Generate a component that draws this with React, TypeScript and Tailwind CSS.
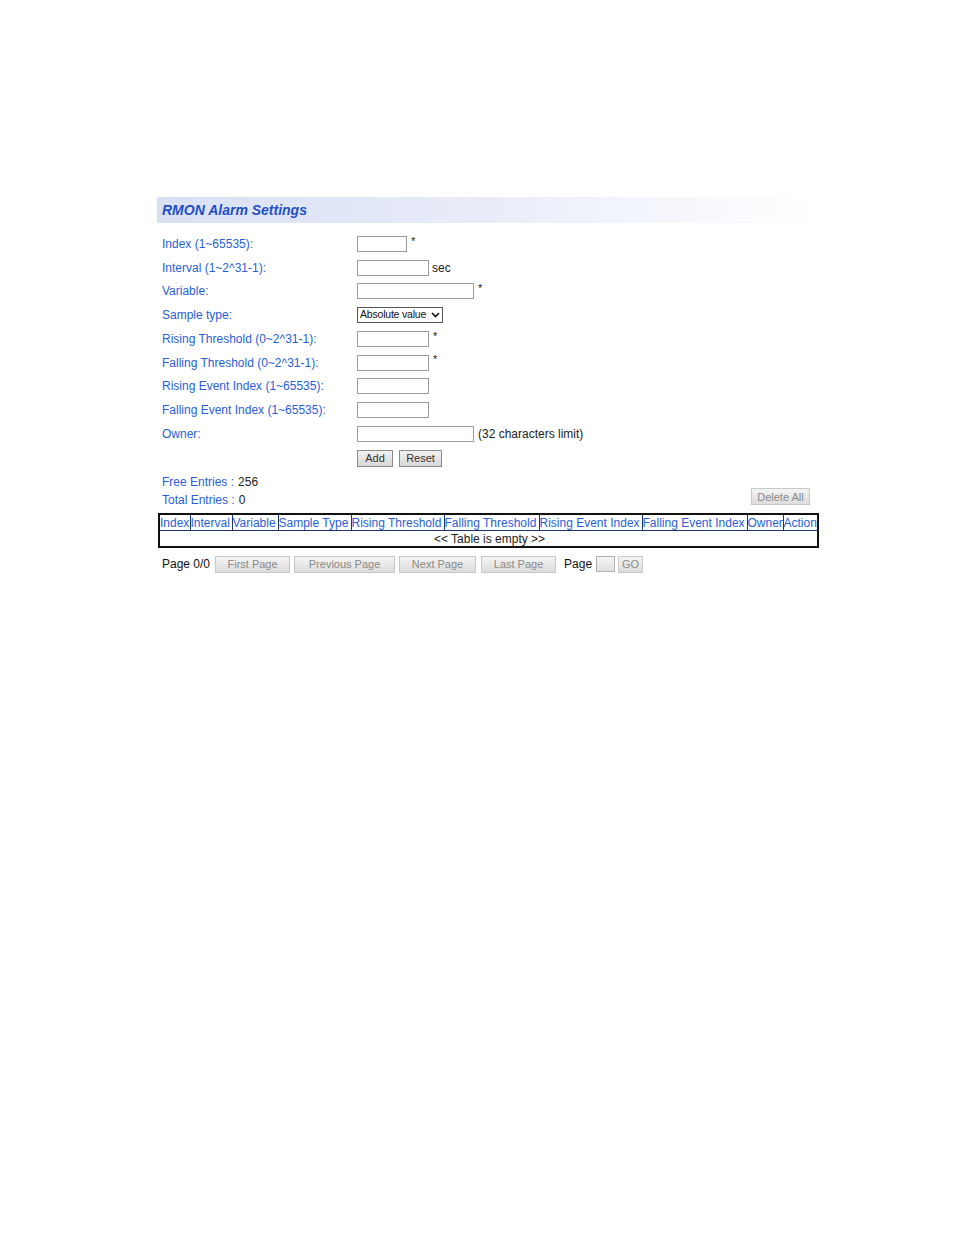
import React from "react";

const labelCls = "text-[12px] text-[#2a5ed8]";

function Input({ w }: { w: number }) {
  return (
    <div
      className="h-[16px] border border-[#9a9a9a] bg-white"
      style={{ width: w }}
    />
  );
}

function Row({ label, children }: { label: string; children?: React.ReactNode }) {
  return (
    <div className="flex h-[23.75px] items-center">
      <div className={`w-[200px] pl-[5px] ${labelCls}`}>{label}</div>
      <div className="flex items-center">{children}</div>
    </div>
  );
}

function Star({ up = true }: { up?: boolean }) {
  return <span className={`ml-[4px] text-[11px] text-[#222] ${up ? "-mt-[6px]" : ""}`}>*</span>;
}

function PgBtn({ children, w }: { children: React.ReactNode; w: number }) {
  return (
    <div
      className="flex h-[17px] items-center justify-center border border-[#c8c8c8] bg-gradient-to-b from-[#f4f4f4] to-[#dcdcdc] text-[11px] text-[#8a8a8a]"
      style={{ width: w }}
    >
      {children}
    </div>
  );
}

const cols: [string, number][] = [
  ["Index", 30],
  ["Interval", 42],
  ["Variable", 46],
  ["Sample Type", 73],
  ["Rising Threshold", 93],
  ["Falling Threshold", 95],
  ["Rising Event Index", 103],
  ["Falling Event Index", 105],
  ["Owner", 36],
  ["Action", 36],
];

export default function App() {
  return (
    <div
      className="min-h-[1235px] w-[954px] bg-white pl-[157px] pt-[197px]"
      style={{ fontFamily: '"Liberation Sans", Arial, sans-serif' }}
    >
      <div className="w-[665px]">
        <div className="flex h-[26px] items-center bg-gradient-to-r from-[#d9e0f4] via-[#e9edf9] to-[#ffffff] pl-[5px]">
          <span className="text-[14px] font-bold italic text-[#1f50c4]">RMON Alarm Settings</span>
        </div>
        <div className="mt-[9px]">
          <Row label="Index (1~65535):">
            <Input w={50} />
            <Star />
          </Row>
          <Row label="Interval (1~2^31-1):">
            <Input w={72} />
            <span className="ml-[3px] text-[12px] text-[#222]">sec</span>
          </Row>
          <Row label="Variable:">
            <Input w={117} />
            <Star />
          </Row>
          <Row label="Sample type:">
            <div className="flex h-[16px] w-[86px] items-center justify-between whitespace-nowrap border border-[#555] bg-white pl-[2px] pr-[2px] text-[10.5px] tracking-[-0.2px] text-[#111]">
              <span>Absolute value</span>
              <svg width="9" height="6" viewBox="0 0 9 6" className="shrink-0">
                <path d="M1 1 L4.5 4.6 L8 1" stroke="#111" strokeWidth="1.5" fill="none" />
              </svg>
            </div>
          </Row>
          <Row label="Rising Threshold (0~2^31-1):">
            <Input w={72} />
            <Star />
          </Row>
          <Row label="Falling Threshold (0~2^31-1):">
            <Input w={72} />
            <Star />
          </Row>
          <Row label="Rising Event Index (1~65535):">
            <Input w={72} />
          </Row>
          <Row label="Falling Event Index (1~65535):">
            <Input w={72} />
          </Row>
          <Row label="Owner:">
            <Input w={117} />
            <span className="ml-[4px] text-[12px] text-[#222]">(32 characters limit)</span>
          </Row>
          <div className="flex h-[24px] items-center pt-[1px] pl-[200px]">
            <div className="flex h-[17px] w-[36px] items-center justify-center border border-[#8a8a8a] bg-gradient-to-b from-[#f2f2f2] to-[#d8d8d8] text-[11px] text-[#333]">
              Add
            </div>
            <div className="ml-[6px] flex h-[17px] w-[43px] items-center justify-center border border-[#8a8a8a] bg-gradient-to-b from-[#f2f2f2] to-[#d8d8d8] text-[11px] text-[#333]">
              Reset
            </div>
          </div>
        </div>
        <div className="mt-[3px] flex h-[18px] items-center pl-[5px] text-[12px]">
          <span className="text-[#2a5ed8]">Free Entries :</span>
          <span className="ml-[4px] text-[#222]">256</span>
        </div>
        <div className="flex h-[18px] items-center justify-between pl-[5px] text-[12px]">
          <div>
            <span className="text-[#2a5ed8]">Total Entries :</span>
            <span className="ml-[4px] text-[#222]">0</span>
          </div>
          <div className="mr-[12px] mt-[-6px] flex h-[17px] w-[59px] items-center justify-center border border-[#c8c8c8] bg-gradient-to-b from-[#f4f4f4] to-[#dcdcdc] text-[11px] text-[#8a8a8a]">
            Delete All
          </div>
        </div>
        <div className="ml-px mt-[4px] w-[661px] border-2 border-[#111]">
          <table className="w-full table-fixed border-collapse">
            <colgroup>
              {cols.map(([n, w]) => (
                <col key={n} style={{ width: w }} />
              ))}
            </colgroup>
            <thead>
              <tr>
                {cols.map(([n]) => (
                  <th
                    key={n}
                    className="h-[16px] overflow-hidden whitespace-nowrap border border-t-0 border-[#1b3668] p-0 text-left text-[12px] font-normal leading-[14px] text-[#2a5ed8] first:border-l-0 last:border-r-0"
                  >
                    {n}
                  </th>
                ))}
              </tr>
            </thead>
            <tbody>
              <tr>
                <td
                  colSpan={10}
                  className="h-[15px] border-t border-[#111] p-0 text-center text-[12px] leading-[14px] text-[#222]"
                >
                  {"<< Table is empty >>"}
                </td>
              </tr>
            </tbody>
          </table>
        </div>
        <div className="mt-[8px] flex h-[17px] items-center">
          <span className="ml-[5px] mr-[5px] text-[12px] text-[#111]">Page 0/0</span>
          <PgBtn w={75}>First Page</PgBtn>
          <div className="w-[4px]" />
          <PgBtn w={101}>Previous Page</PgBtn>
          <div className="w-[4px]" />
          <PgBtn w={77}>Next Page</PgBtn>
          <div className="w-[5px]" />
          <PgBtn w={75}>Last Page</PgBtn>
          <span className="ml-[8px] mr-[4px] text-[12px] text-[#111]">Page</span>
          <div className="h-[16px] w-[19px] border border-[#b0b0b0] bg-gradient-to-b from-[#f4f4f4] to-[#e0e0e0]" />
          <div className="w-[3px]" />
          <PgBtn w={25}>GO</PgBtn>
        </div>
      </div>
    </div>
  );
}
